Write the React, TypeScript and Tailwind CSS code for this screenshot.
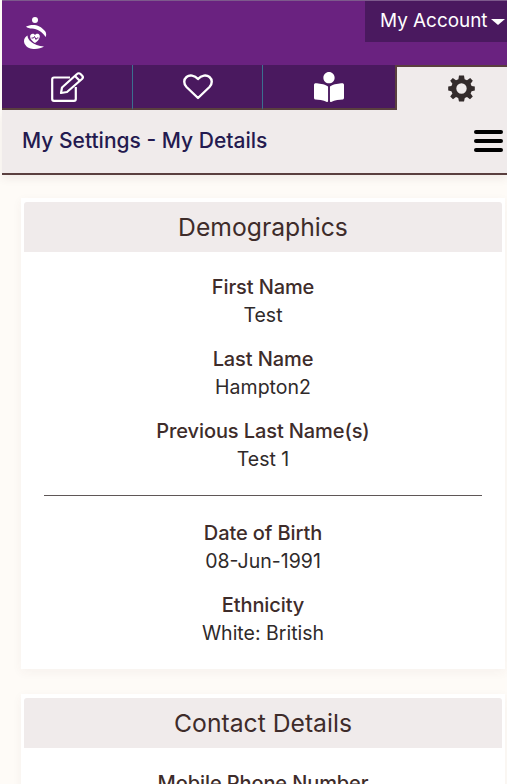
import { FaBookReader } from "react-icons/fa";

function Logo() {
  return (
    <svg width="26" height="36" viewBox="0 0 26 36" fill="white">
      <circle cx="13" cy="4" r="3" />
      <path d="M4 10.5 C10 7.5 18 8.5 23 15 C24.5 17 24.5 19.5 23.5 21 C21 16.5 15 12.5 10 12.5 C8 12.5 5 12 4 10.5 Z" />
      <path d="M2 25 C2 22.5 3.5 20.5 5.5 19.5 C5.5 24 11 29.5 22 30.5 C17 34 6 34 3.5 29 C2.5 28 2 26.5 2 25 Z" />
      <path d="M13 27 C8.5 24 7.5 21 8.5 19 C10 17 12 17.5 13 19 C14 17.5 16.5 17 17.5 19 C18.5 21 17 24.5 13 27 Z" />
      <path d="M9.5 22 H11.5 L12.5 20.5 L14 23.5 L15 22 H16.5" fill="none" stroke="#6a2280" strokeWidth="1" />
    </svg>
  );
}

function EditIcon() {
  return (
    <svg width="33" height="30" viewBox="0 0 33 30" fill="none" stroke="white" strokeWidth="2.2" strokeLinejoin="round">
      <path d="M19 5.5 H3 C2 5.5 1.2 6.3 1.2 7.5 V27 C1.2 28 2 28.8 3 28.8 H23 C24 28.8 24.8 28 24.8 27 V15" />
      <path d="M10 21 L11 15.5 L26 2 C27 1 28.5 1 29.5 2 L31 3.5 C32 4.5 32 6 31 7 L16 20 Z" />
      <path d="M24 4 L29 9" />
    </svg>
  );
}

function HeartIcon() {
  return (
    <svg width="30" height="26" viewBox="0 0 30 26" fill="none" stroke="white" strokeWidth="2.4" strokeLinejoin="round">
      <path d="M15 24 L3.5 13 C0.5 10 0.5 5.5 3.5 3 C6.5 0.5 11.5 1 15 5 C18.5 1 23.5 0.5 26.5 3 C29.5 5.5 29.5 10 26.5 13 Z" />
    </svg>
  );
}

function GearIcon() {
  return (
    <svg width="27" height="27" viewBox="0 0 27 27" fill="#332b2b" fillRule="evenodd">
      <path d="M11 0.5 H16 L16.6 4.2 L19 5.2 L22.2 3 L24.8 5.8 L22.6 8.8 L23.6 11 L26.8 11.4 V15.6 L23.6 16.2 L22.6 18.4 L24.8 21.4 L22 24.2 L19 22 L16.8 23 L16 26.5 H11 L10.2 23 L8 22 L5 24.2 L2.2 21.4 L4.4 18.4 L3.4 16.2 L0.2 15.6 V11.4 L3.4 11 L4.4 8.8 L2.2 5.8 L4.8 3 L8 5.2 L10.4 4.2 Z M13.5 8.3 A5.2 5.2 0 1 0 13.5 18.7 A5.2 5.2 0 1 0 13.5 8.3 Z" />
    </svg>
  );
}

function Field({ label, value, className = "" }: { label: string; value: string; className?: string }) {
  return (
    <div className={"text-center " + className}>
      <div className="text-[20px] leading-[26px] font-medium tracking-[-0.1px] text-[#3e2c2a]">{label}</div>
      <div className="mt-[2px] text-[19.5px] leading-[26px] text-[#2f2a2a]">{value}</div>
    </div>
  );
}

function Card({ title, children }: { title: string; children: React.ReactNode }) {
  return (
    <div className="ml-[21px] w-[484px] bg-white px-[3px] pt-[4px] pb-[23px] shadow-[0_3px_10px_rgba(90,63,63,0.05)]">
      <div className="h-[50px] rounded-t-[3px] bg-[#f0ebeb] text-center text-[24.7px] leading-[50px] text-[#3e2c2a]">
        {title}
      </div>
      {children}
    </div>
  );
}

export default function App() {
  return (
    <div
      className="h-[784px] w-[507px] overflow-hidden bg-[#fefbf7] pl-[2px]"
      style={{ fontFamily: "Inter, 'Liberation Sans', sans-serif" }}
    >
      {/* purple header */}
      <div className="flex h-[65px] justify-between bg-[#6a2280] border-t border-[#7d5a8c]">
        <div className="pl-[20px] pt-[15px]">
          <Logo />
        </div>
        <div className="flex h-[41px] w-[142px] items-start gap-[3px] bg-[#4a195f] pl-[15px] pt-[7px] text-[18.9px] leading-[26px] text-white">
          My Account
          <span className="mt-[11px] border-x-[7px] border-t-[6px] border-x-transparent border-t-white" />
        </div>
      </div>

      {/* tabs */}
      <div className="flex h-[45px]">
        <div className="flex w-[131px] items-center justify-center border-b-2 border-r border-b-[#5a3f3f] border-r-[#3b6f8f] bg-[#4a195f] text-white">
          <EditIcon />
        </div>
        <div className="flex w-[130px] items-center justify-center border-b-2 border-r border-b-[#5a3f3f] border-r-[#3b6f8f] bg-[#4a195f] text-white">
          <HeartIcon />
        </div>
        <div className="flex w-[132px] items-center justify-center border-b-2 border-b-[#5a3f3f] bg-[#4a195f] text-white">
          <FaBookReader size={30} />
        </div>
        <div className="flex w-[112px] items-center justify-center border-l-2 border-t-2 border-[#5a3f3f] bg-[#f0ebeb] pl-[18px] text-[#332b2b]">
          <GearIcon />
        </div>
      </div>

      {/* page title */}
      <div className="flex h-[65px] items-center justify-between border-b-2 border-[#5a3f3f] bg-[#f0ebeb] pb-[2px] pl-[20px] pr-[4px] shadow-[0_4px_8px_rgba(90,63,63,0.08)]">
        <div className="text-[21px] font-medium text-[#241a4f]">My Settings - My Details</div>
        <div className="flex w-[29px] flex-col gap-[5px]">
          <div className="h-[4px] rounded-full bg-black" />
          <div className="h-[4px] rounded-full bg-black" />
          <div className="h-[4px] rounded-full bg-black" />
        </div>
      </div>

      <div className="-ml-[2px] pt-[23px]">
        <Card title="Demographics">
          <Field label="First Name" value="Test" className="mt-[22px]" />
          <Field label="Last Name" value="Hampton2" className="mt-[18px]" />
          <Field label="Previous Last Name(s)" value="Test 1" className="mt-[18px]" />
          <div className="mx-[20px] mt-[23px] border-t border-[#5f5757]" />
          <Field label="Date of Birth" value="08-Jun-1991" className="mt-[24px]" />
          <Field label="Ethnicity" value="White: British" className="mt-[18px]" />
        </Card>
        <div className="h-[25px]" />
        <Card title="Contact Details">
          <Field label="Mobile Phone Number" value="" className="mt-[22px]" />
        </Card>
      </div>
    </div>
  );
}
